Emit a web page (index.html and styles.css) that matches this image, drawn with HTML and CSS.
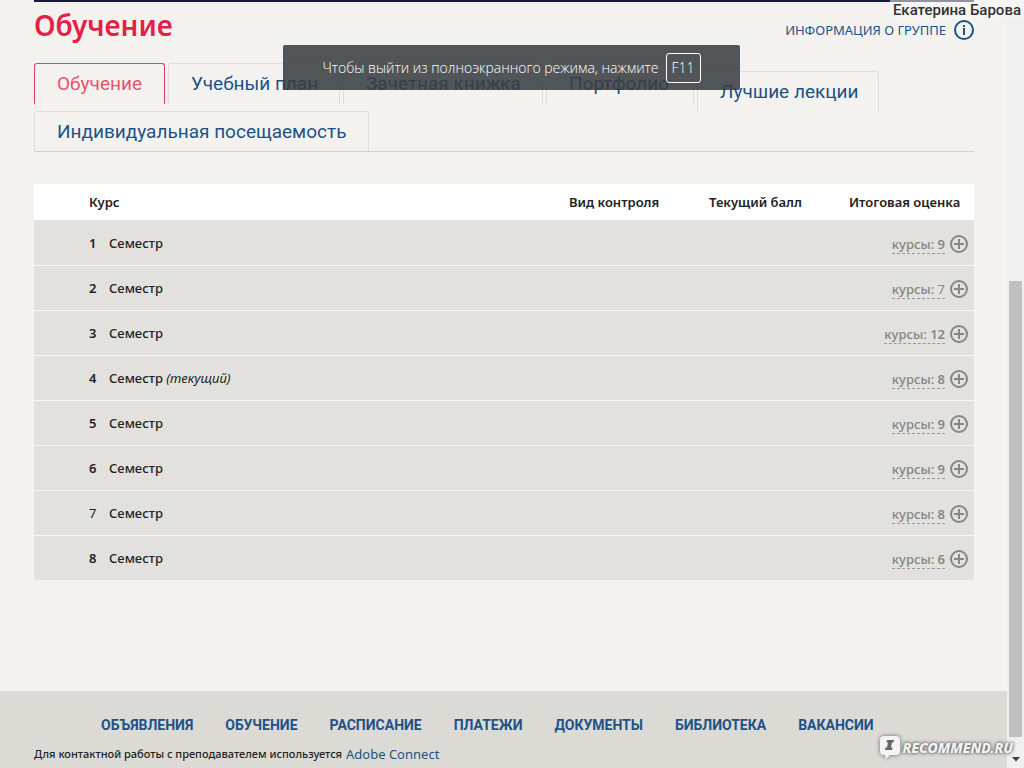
FILE: index.html
```html
<!DOCTYPE html>
<html lang="ru">
<head>
<meta charset="utf-8">
<title>Обучение</title>
<link rel="stylesheet" href="styles.css">
</head>
<body>
<div class="window">
  <div class="page">
    <main class="content">
      <div class="heading">
        <h1 class="title">Обучение</h1>
        <a class="group-info" href="#">ИНФОРМАЦИЯ О ГРУППЕ
          <svg class="info-icon" viewBox="0 0 20 20" aria-hidden="true"><circle cx="10" cy="10" r="9" fill="none" stroke="currentColor" stroke-width="2"/><path d="M9 5h2v2H9zM9 8h2v7H9z" fill="currentColor"/></svg>
        </a>
      </div>
      <nav class="tabs">
        <a class="tab tab-active" href="#">Обучение</a>
        <a class="tab" href="#">Учебный план</a>
        <a class="tab" href="#">Зачетная книжка</a>
        <a class="tab" href="#">Портфолио</a>
        <a class="tab tab-low" href="#">Лучшие лекции</a>
        <a class="tab tab-wide" href="#">Индивидуальная посещаемость</a>
      </nav>
      <table class="courses">
        <thead>
          <tr><th class="col-name">Курс</th><th class="col-kind">Вид контроля</th><th class="col-kind">Текущий балл</th><th class="col-grade">Итоговая оценка</th></tr>
        </thead>
        <tbody id="semesters"></tbody>
      </table>
    </main>
    <footer class="footer">
      <nav class="footer-nav">
        <a href="#">ОБЪЯВЛЕНИЯ</a>
        <a href="#">ОБУЧЕНИЕ</a>
        <a href="#">РАСПИСАНИЕ</a>
        <a href="#">ПЛАТЕЖИ</a>
        <a href="#">ДОКУМЕНТЫ</a>
        <a href="#">БИБЛИОТЕКА</a>
        <a href="#">ВАКАНСИИ</a>
      </nav>
      <p class="note"><span>Для контактной работы с преподавателем используется</span> <a href="#">Adobe Connect</a></p>
    </footer>
  </div>
  <div class="scrollbar">
    <div class="thumb"></div>
    <svg class="arrow" viewBox="0 0 8 5" aria-hidden="true"><path d="M0 0h8L4 4.500z" fill="#404040"/></svg>
  </div>
  <div class="fullscreen-tip">Чтобы выйти из полноэкранного режима, нажмите <kbd class="key">F11</kbd></div>
  <div class="author">Екатерина Барова</div>
  <div class="watermark">
    <svg class="watermark-icon" viewBox="0 0 22 25" aria-hidden="true"><path d="M5 1h12q4 0 4 4v11q0 4-4 4h-6l-4 4-1-4H5q-4 0-4-4V5q0-4 4-4z" fill="#f4f4f4"/><path d="M8 5h7l-.5 2.500H13l-1 5h1.500l-.5 2.500H6l.5-2.500H8l1-5H7.500z" fill="#666"/></svg>
    <span>RECOMMEND.RU</span>
  </div>
</div>
<script src="script.js"></script>
</body>
</html>
```
FILE: script.js
```js
const courses = [9, 7, 12, 8, 9, 9, 8, 6];
const plus = '<svg class="plus" viewBox="0 0 18 18" aria-hidden="true"><circle cx="9" cy="9" r="8" fill="none" stroke="currentColor" stroke-width="2"/><path d="M4 9h10M9 4v10" stroke="currentColor" stroke-width="2"/></svg>';
document.getElementById('semesters').innerHTML = courses.map((count, i) => {
  const note = i === 3 ? ' <i class="current">(текущий)</i>' : '';
  const light = i === 6 ? ' light' : '';
  const value = count === 7 ? `<span class="light">${count}</span>` : `<span class="count">${count}</span>`;
  return `<tr><td class="semester"><span class="number${light}">${i + 1}</span>Семестр${note}</td><td></td><td></td>
    <td class="expand-cell"><button class="expand" type="button"><span class="expand-label">курсы: ${value}</span>${plus}</button></td></tr>`;
}).join('');
```
FILE: styles.css
```css
* { box-sizing: border-box; }
body { margin: 0; background: #f3f2ee; color: #222; font: 13px/20px "Noto Sans", sans-serif; }
a { color: #1d5288; text-decoration: none; }
.window { position: relative; display: grid; grid-template-columns: 1fr 17px; min-height: 100vh; }
.page { display: flex; flex-direction: column; }
.content { flex: 1; margin: 0 33px 0 34px; border-top: 2px solid #17183a; }
.heading { display: flex; justify-content: space-between; height: 61px; }
.title { margin: 5px 0 0; color: #e51f48; font: 600 28px/36px "Noto Sans", sans-serif; }
.group-info { display: flex; align-items: center; gap: 8px; height: 20px; margin-top: 18px; font-size: 13px; }
.info-icon { width: 20px; height: 20px; }

.tabs { display: grid; grid-template-columns: 131px 172px 200px 148px 182px; grid-template-rows: 48px 40px; column-gap: 3px; border-bottom: 1px solid #cfcfcb; font-family: Roboto, sans-serif; font-size: 19px; }
.tab { height: 41px; padding: 0 22px; border: 1px solid #dededb; border-bottom: 0; border-radius: 3px 3px 0 0; line-height: 40px; white-space: nowrap; }
.tab-active { border-color: #dc4660; color: #e8536d; }
.tab-low { align-self: end; height: 40px; }
.tab-wide { grid-column: 1 / span 3; justify-self: start; height: 40px; }

.courses { width: 100%; margin: 32px 0 0; border-collapse: collapse; table-layout: fixed; }
.courses th { height: 36px; padding: 0; background: #fff; text-align: left; font-weight: 600; }
.courses .col-name { padding-left: 55px; }
.col-kind { width: 140px; }
.col-grade { width: 125px; }
.courses td { height: 45px; padding: 0; background: #e2e1dd; border-top: 1px solid #f7f7f3; }
.courses tr:first-child td { border-top-color: #e2e1dd; }
.courses .semester { padding-left: 55px; font-weight: 500; }
.current { font-weight: 400; }
.number { display: inline-block; width: 20px; font-weight: 600; }
.light, .number.light { font-weight: 400; }
.expand-cell { text-align: right; }
.expand { display: inline-flex; align-items: center; gap: 5px; padding: 2px 6px 0 0; border: 0; background: none; color: #868683; font: 500 13px/18px "Noto Sans", sans-serif; vertical-align: middle; }
.expand-label { border-bottom: 1px dashed #999; }
.count { font-weight: 600; }
.plus { width: 18px; height: 18px; }

.footer { min-height: 77px; padding: 24px 34px 3px; background: #dbdad5; }
.footer-nav { display: flex; gap: 32px; padding-left: 67px; font: 700 14px/20px Roboto, sans-serif; }
.note { display: flex; gap: 4px; margin: 9px 0 0; }
.note span { font-size: 11px; font-weight: 500; }
.note a { font-size: 13px; }

.scrollbar { display: flex; flex-direction: column; align-items: center; justify-content: flex-end; background: #f0f0f0; }
.thumb { width: 13px; height: 456px; background: #c0c0c0; }
.arrow { width: 8px; height: 5px; margin: 20px 0 6px; }

.fullscreen-tip { position: absolute; top: 45px; left: 283px; display: flex; align-items: center; justify-content: center; gap: 7px; width: 457px; height: 45px; border-radius: 2px; background: rgba(58, 61, 66, .87); color: #fff; font: 300 14px/20px "Open Sans", sans-serif; }
.key { padding: 4px 5px; border: 1px solid #fff; border-radius: 3px; font: inherit; }
.author { position: absolute; top: 0; right: 0; padding: 1px 3px 0; background: rgba(248, 248, 248, .55); color: #333; font: 500 15px/18px Roboto, sans-serif; }
.watermark { position: absolute; right: 11px; bottom: 8px; display: flex; align-items: center; gap: 1px; color: #f4f4f4; font: italic 800 14px/20px "Noto Sans", sans-serif; text-shadow: 0 0 3px #555, 0 0 4px #777; }
.watermark-icon { width: 22px; height: 25px; filter: drop-shadow(0 0 2px #666); }
```
